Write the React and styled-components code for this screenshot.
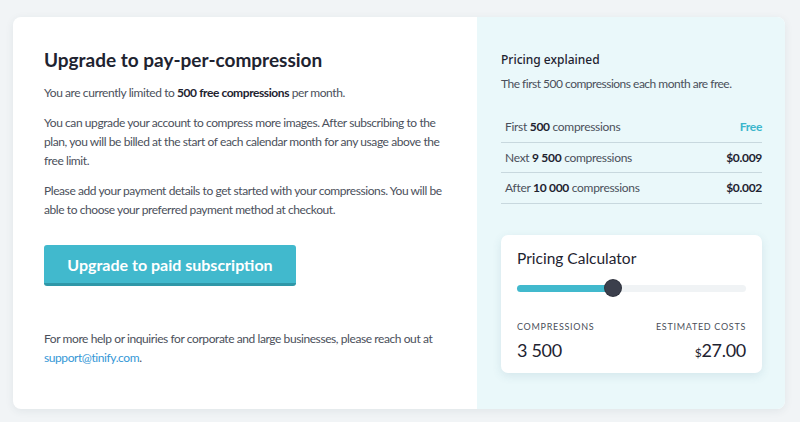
import styled, { createGlobalStyle } from 'styled-components';

const GlobalStyle = createGlobalStyle`
  html, body {
    margin: 0;
    padding: 0;
    background: #f1f4f6;
  }
  body {
    font-family: Lato, 'Noto Sans', sans-serif;
    color: #4b505b;
  }
  * {
    box-sizing: border-box;
  }
`;

const Page = styled.div`
  padding: 17px 15px 13px 13px;
`;

const Card = styled.div`
  display: flex;
  width: 772px;
  height: 392px;
  border-radius: 8px;
  overflow: hidden;
  background: #ffffff;
  box-shadow: 0 2px 8px rgba(40, 60, 80, 0.08);
`;

const Main = styled.div`
  width: 464px;
  padding: 30px 31px 0 31px;
  display: flex;
  flex-direction: column;
`;

const Title = styled.h1`
  margin: 0 0 10px;
  font-size: 19px;
  line-height: 26px;
  font-weight: 700;
  color: #1e2330;
`;

const Text = styled.p`
  margin: 0 0 11px;
  font-size: 12px;
  line-height: 19px;
  letter-spacing: -0.42px;
  color: #4b505b;
  b {
    color: #1e2330;
  }
`;

const UpgradeButton = styled.button`
  align-self: flex-start;
  margin-top: 15px;
  width: 252px;
  height: 41px;
  border: none;
  border-bottom: 3px solid #2f97a8;
  border-radius: 3px;
  background: #41b9cd;
  color: #ffffff;
  font-family: Lato, 'Noto Sans', sans-serif;
  font-weight: 700;
  font-size: 16px;
  cursor: pointer;
`;

const Footer = styled(Text)`
  margin-top: 43px;
`;

const Link = styled.a`
  color: #3597d6;
  text-decoration: none;
`;

const Side = styled.div`
  flex: 1;
  background: #eaf8fa;
  padding: 34px 23px 0 24px;
  display: flex;
  flex-direction: column;
`;

const SideTitle = styled.h2`
  margin: 0 0 6px;
  font-family: 'Noto Sans', sans-serif;
  font-size: 12px;
  line-height: 18px;
  font-weight: 500;
  color: #1e2330;
`;

const SideText = styled.p`
  margin: 0 0 19px;
  font-size: 12px;
  line-height: 18px;
  letter-spacing: -0.5px;
`;

const Row = styled.div`
  display: flex;
  justify-content: space-between;
  align-items: center;
  height: 30.5px;
  padding: 0 0 0 4px;
  border-bottom: 1px solid #c8d8de;
  font-size: 12px;
  letter-spacing: -0.3px;
  b {
    color: #1e2330;
  }
`;

const Price = styled.span`
  font-weight: 700;
  color: ${(p) => (p.$free ? '#3ab6cc' : '#1e2330')};
`;

const Calculator = styled.div`
  margin-top: 31px;
  height: 138px;
  background: #ffffff;
  border-radius: 7px;
  box-shadow: 0 3px 10px rgba(60, 110, 130, 0.12);
  padding: 12px 16px 0 16px;
`;

const CalcTitle = styled.div`
  font-size: 15.5px;
  line-height: 22px;
  color: #1e2330;
`;

const Track = styled.div`
  position: relative;
  margin-top: 16px;
  height: 7px;
  border-radius: 4px;
  background: #f0f3f5;
`;

const Fill = styled.div`
  height: 100%;
  border-radius: 4px;
  background: #41b9cd;
`;

const Thumb = styled.div`
  position: absolute;
  top: 50%;
  width: 16px;
  height: 16px;
  margin: -8px 0 0 -8px;
  border-radius: 50%;
  background: #3b3f4c;
  box-shadow: 0 0 0 1px #2e323d;
`;

const Stats = styled.div`
  display: flex;
  justify-content: space-between;
  margin-top: 28px;
`;

const Stat = styled.div`
  display: flex;
  flex-direction: column;
  align-items: ${(p) => (p.$right ? 'flex-end' : 'flex-start')};
`;

const StatLabel = styled.div`
  font-size: 9px;
  line-height: 14px;
  letter-spacing: 0.7px;
  color: #4b505b;
`;

const StatValue = styled.div`
  margin-top: 4px;
  font-size: 18px;
  line-height: 24px;
  letter-spacing: -0.3px;
  color: #1e2330;
  small {
    font-size: 12px;
  }
`;

const tiers = [
  { pre: 'First', count: '500', price: 'Free', free: true },
  { pre: 'Next', count: '9 500', price: '$0.009' },
  { pre: 'After', count: '10 000', price: '$0.002' },
];

function App() {
  const progress = 42;
  return (
    <Page>
      <GlobalStyle />
      <Card>
        <Main>
          <Title>Upgrade to pay-per-compression</Title>
          <Text>
            You are currently limited to <b>500 free compressions</b> per month.
          </Text>
          <Text>
            You can upgrade your account to compress more images. After subscribing to the
            plan, you will be billed at the start of each calendar month for any usage above the
            free limit.
          </Text>
          <Text>
            Please add your payment details to get started with your compressions. You will be
            able to choose your preferred payment method at checkout.
          </Text>
          <UpgradeButton>Upgrade to paid subscription</UpgradeButton>
          <Footer>
            For more help or inquiries for corporate and large businesses, please reach out at{' '}
            <Link href='#'>support@tinify.com</Link>.
          </Footer>
        </Main>
        <Side>
          <SideTitle>Pricing explained</SideTitle>
          <SideText>The first 500 compressions each month are free.</SideText>
          {tiers.map((t) => (
            <Row key={t.pre}>
              <span>
                {t.pre} <b>{t.count}</b> compressions
              </span>
              <Price $free={t.free}>{t.price}</Price>
            </Row>
          ))}
          <Calculator>
            <CalcTitle>Pricing Calculator</CalcTitle>
            <Track>
              <Fill style={{ width: `${progress}%` }} />
              <Thumb style={{ left: `${progress}%` }} />
            </Track>
            <Stats>
              <Stat>
                <StatLabel>COMPRESSIONS</StatLabel>
                <StatValue>3 500</StatValue>
              </Stat>
              <Stat $right>
                <StatLabel>ESTIMATED COSTS</StatLabel>
                <StatValue>
                  <small>$</small>27.00
                </StatValue>
              </Stat>
            </Stats>
          </Calculator>
        </Side>
      </Card>
    </Page>
  );
}

export default App;
